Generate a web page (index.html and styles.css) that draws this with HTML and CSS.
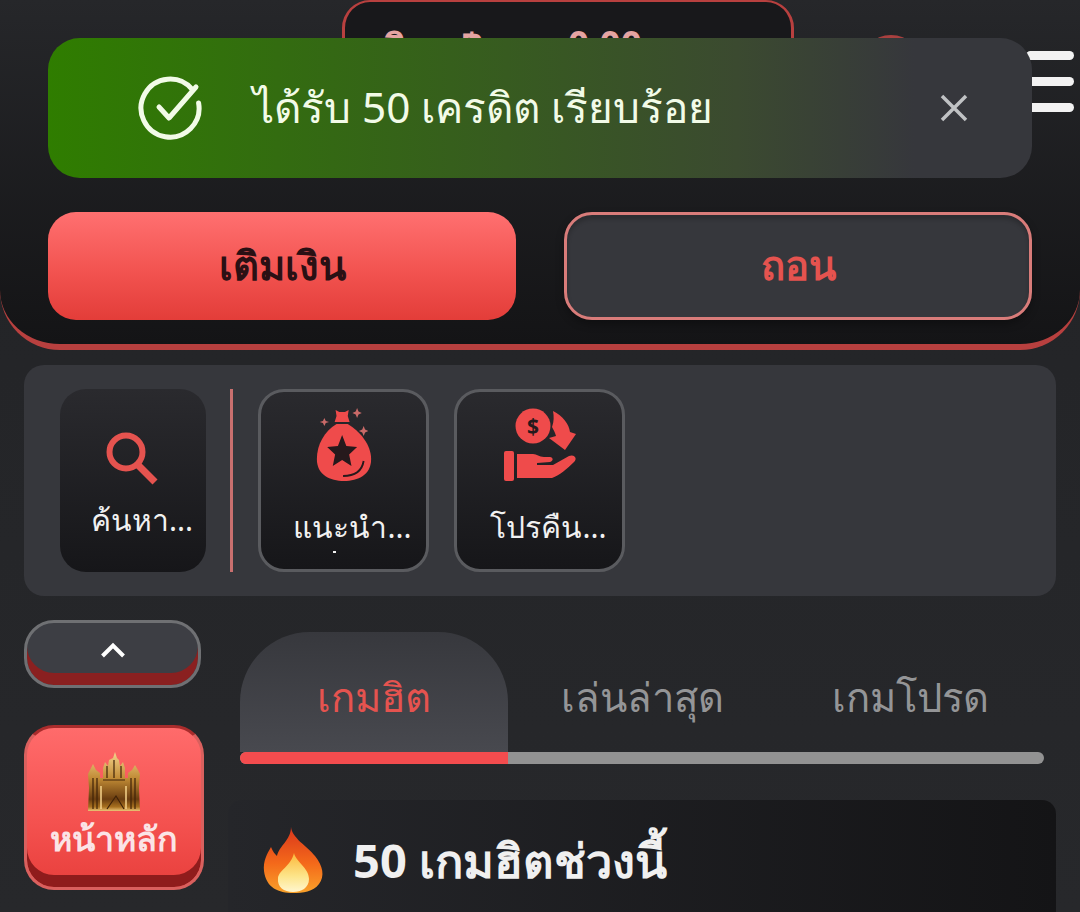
FILE: index.html
```html
<!DOCTYPE html>
<html lang="th">
<head>
    <meta charset="UTF-8">
    <meta name="viewport" content="width=device-width, initial-scale=1.0">
    <title>หน้าหลัก</title>
    <link rel="stylesheet" href="styles.css">
</head>
<body>
    <div class="page">
        <header class="header">
            <div class="top-row">
                <div class="balance">
                    <span class="balance-name">เงิน</span>
                    <span class="balance-sign">฿</span>
                    <span class="balance-amount">0.00</span>
                </div>
                <div class="avatar"></div>
                <div class="burger"><span></span><span></span><span></span></div>
            </div>
            <div class="actions">
                <button class="btn btn-deposit">เติมเงิน</button>
                <button class="btn btn-withdraw">ถอน</button>
            </div>
        </header>

        <section class="quick">
            <div class="quick-item quick-search">
                <svg class="quick-icon icon-search" viewBox="0 0 56 56">
                    <circle cx="21" cy="21" r="16.500" fill="none" stroke="#e5534f" stroke-width="6"/>
                    <path d="M33 34 L50 51" stroke="#e5534f" stroke-width="7" fill="none"/>
                </svg>
                <span class="quick-label">ค้นหา...</span>
            </div>
            <div class="quick-divider"></div>
            <div class="quick-item quick-framed">
                <svg class="quick-icon icon-bag" viewBox="0 0 62 76" preserveAspectRatio="none">
                    <path d="M22 3 L26 5 L32 5 L36 3 L35 9 L37 15 L21 15 L23 9 Z" fill="#ef4b4b"/>
                    <path d="M23 17 L35 17 C48 24 60 38 60 52 C60 68 46 74 31 74 C16 74 2 68 2 52 C2 38 10 24 23 17 Z" fill="#ef4b4b"/>
                    <path d="M29 28 L33.500 39 L45 40 L36.500 47.500 L39 59 L29 53 L19 59 L21.500 47.500 L13 40 L24.500 39 Z" fill="#26191c"/>
                    <path d="M30 69 C42 69 50 65 52 54" fill="none" stroke="#26191c" stroke-width="2"/>
                    <path d="M45 1 L46.500 4.500 L50 6 L46.500 7.500 L45 11 L43.500 7.500 L40 6 L43.500 4.500 Z" fill="#c96a68"/>
                    <path d="M10 11 L11.500 14 L15 15 L11.500 16 L10 19 L8.500 16 L5 15 L8.500 14 Z" fill="#c96a68"/>
                    <path d="M52 19 L53.500 22.500 L57 24 L53.500 25.500 L52 29 L50.500 25.500 L47 24 L50.500 22.500 Z" fill="#c96a68"/>
                </svg>
                <span class="quick-label quick-label-low">แนะนำ...</span>
                <span class="quick-cut"></span>
            </div>
            <div class="quick-item quick-framed">
                <svg class="quick-icon icon-refund" viewBox="0 0 74 76">
                    <circle cx="30" cy="19" r="17.500" fill="#ef4b4b"/>
                    <text x="30" y="26.500" class="dollar" text-anchor="middle">$</text>
                    <path d="M50 4 C60 9 66 17 67 25 L73 27 L62 43 L46 31 L53 29 C52 25 50 22 49 20 C51 15 51 9 50 4 Z" fill="#ef4b4b"/>
                    <rect x="1" y="44" width="10" height="30" rx="2" fill="#ef4b4b"/>
                    <path d="M14 47 L30 47 C34 47 36 50 41 50 L47 50 C50 50 51 54 47 55 L34 56 L34 58 L50 58 L66 49 C71 47 75 51 71 55 C64 62 57 68 49 71 L14 71 Z" fill="#ef4b4b"/>
                </svg>
                <span class="quick-label quick-label-low">โปรคืน...</span>
            </div>
        </section>

        <div class="main">
            <aside class="side">
                <button class="up-btn">
                    <svg class="up-arrow" viewBox="0 0 26 16"><path d="M2.500 14 L13 3.500 L23.500 14" fill="none" stroke="#fff" stroke-width="4"/></svg>
                </button>
                <button class="home-btn">
                    <svg class="castle" viewBox="0 0 54 60">
                        <defs>
                            <linearGradient id="gold" x1="0" y1="0" x2="0" y2="1">
                                <stop offset="0" stop-color="#f6d48c"/>
                                <stop offset="0.45" stop-color="#c08a35"/>
                                <stop offset="0.8" stop-color="#6a3d10"/>
                                <stop offset="0.93" stop-color="#a8701f"/>
                                <stop offset="1" stop-color="#edc578"/>
                            </linearGradient>
                        </defs>
                        <path d="M28 0 L30 6 L32 8 L33 14 L36 10 L38 16 L38 26 L41 26 L41 21 L45 18 L48 13 L51 18 L53 22 L52 36 L53 59 L1 59 L2 36 L1 22 L3 18 L6 12 L9 18 L13 21 L13 26 L16 26 L16 16 L18 10 L21 14 L22 8 L26 6 Z" fill="url(#gold)"/>
                        <path d="M6 26 V57 M10 26 V57 M44 26 V57 M48 26 V57 M16 28 H38 M20 57 L29 44 L37 57 M20 14 V26 M27 8 V26 M34 14 V26" fill="none" stroke="#3f2208" stroke-width="1.200"/>
                        <path d="M14 34 V57 M39 34 V57" fill="none" stroke="#f6d48c" stroke-width="1.500"/>
                    </svg>
                    <span class="home-label">หน้าหลัก</span>
                </button>
            </aside>

            <div class="content">
                <nav class="tabs">
                    <div class="tab tab-active">เกมฮิต</div>
                    <div class="tab">เล่นล่าสุด</div>
                    <div class="tab">เกมโปรด</div>
                </nav>
                <div class="tab-bar"><div class="tab-bar-fill"></div></div>

                <div class="hot-card">
                    <svg class="flame" viewBox="0 0 62 68">
                        <defs>
                            <linearGradient id="flameOuter" x1="0" y1="0" x2="0" y2="1">
                                <stop offset="0" stop-color="#d9361c"/>
                                <stop offset="0.55" stop-color="#f4691a"/>
                                <stop offset="1" stop-color="#f9a12a"/>
                            </linearGradient>
                            <linearGradient id="flameInner" x1="0" y1="0" x2="0" y2="1">
                                <stop offset="0" stop-color="#fbb73a"/>
                                <stop offset="0.6" stop-color="#fde58a"/>
                                <stop offset="1" stop-color="#fff6cf"/>
                            </linearGradient>
                        </defs>
                        <path d="M28 1 C29 12 44 20 52 30 C60 40 62 50 56 58 C50 66 40 67 30 67 C16 67 3 62 1 45 C0 35 4 28 8 21 C10 26 12 28 14 30 C16 20 28 14 28 1 Z" fill="url(#flameOuter)"/>
                        <path d="M31 27 C33 36 46 42 46 53 C46 62 38 66 30 66 C21 66 14 61 15 52 C16 44 28 40 31 27 Z" fill="url(#flameInner)"/>
                    </svg>
                    <h2 class="hot-title">50 เกมฮิตช่วงนี้</h2>
                </div>
            </div>
        </div>

        <div class="toast">
            <svg class="toast-check" viewBox="0 0 68 68">
                <path d="M55.200 15.400 A29 29 0 1 0 61.600 29" fill="none" stroke="#f2fbe8" stroke-width="5" stroke-linecap="round"/>
                <path d="M22 33 L32 44 L59 13" fill="none" stroke="#f2fbe8" stroke-width="5" stroke-linecap="round" stroke-linejoin="round"/>
            </svg>
            <span class="toast-text">ได้รับ 50 เครดิต เรียบร้อย</span>
            <svg class="toast-close" viewBox="0 0 28 28">
                <path d="M2 2 L26 26 M26 2 L2 26" stroke="#c0c2c4" stroke-width="3.500"/>
            </svg>
        </div>
    </div>
</body>
</html>
```

FILE: styles.css
```css
* {
    box-sizing: border-box;
}

html, body {
    margin: 0;
    height: 100%;
}

body {
    font-family: "Noto Sans", "Open Sans", sans-serif;
    background-color: #26272b;
    overflow: hidden;
}

button {
    font-family: inherit;
    padding: 0;
    cursor: pointer;
}

.page {
    position: relative;
    width: 1080px;
    height: 912px;
    overflow: hidden;
    background: linear-gradient(to bottom, #222326, #27282b);
}

/* Header */
.header {
    height: 350px;
    padding: 0 48px;
    background: linear-gradient(to bottom, #26272a, #141416);
    border-bottom: 6px solid #b8403f;
    border-radius: 0 0 60px 60px;
}

.top-row {
    display: flex;
    align-items: flex-start;
    height: 212px;
}

.balance {
    display: flex;
    width: 452px;
    height: 150px;
    margin-left: 294px;
    padding: 16px 0 0 30px;
    flex-shrink: 0;
    background: #18181b;
    border: 3px solid #b8403f;
    border-top-width: 2px;
    border-radius: 28px;
    color: #e5a4a2;
    font-size: 37px;
    font-weight: 700;
}

.balance-sign {
    margin-left: 30px;
}

.balance-amount {
    margin-left: 84px;
}

.avatar {
    width: 62px;
    height: 62px;
    margin: 35px 0 0 66px;
    flex-shrink: 0;
    border-radius: 50%;
    background: #a8403f;
}

.burger {
    display: flex;
    flex-direction: column;
    gap: 17px;
    width: 48px;
    margin: 51px 0 0 104px;
    flex-shrink: 0;
}

.burger span {
    height: 9px;
    border-radius: 5px;
    background: #f2f2f2;
}

.actions {
    display: grid;
    grid-template-columns: 1fr 1fr;
    gap: 48px;
}

.btn {
    height: 108px;
    border-radius: 28px;
    font-size: 40px;
    font-weight: 700;
}

.btn-deposit {
    color: #2a1014;
    border: none;
    background: linear-gradient(to bottom, #ff7070, #f25350 55%, #e33d39);
}

.btn-withdraw {
    color: #e5534f;
    background: #36373c;
    border: 3px solid #d97c7a;
    box-shadow: inset 0 4px 4px rgba(0, 0, 0, 0.2), 0 4px 8px rgba(0, 0, 0, 0.3);
}

/* Quick menu */
.quick {
    display: flex;
    align-items: stretch;
    gap: 25px;
    height: 231px;
    margin: 15px 24px 0;
    padding: 24px 36px;
    background: #36373c;
    border-radius: 20px;
}

.quick-item {
    display: flex;
    flex-direction: column;
    align-items: center;
    border-radius: 26px;
    background: linear-gradient(to bottom, #2a2a2e, #161619);
    overflow: hidden;
}

.quick-search {
    width: 146px;
    padding-top: 42px;
}

.quick-framed {
    width: 171px;
    padding-top: 15px;
    border: 3px solid #5a5b5f;
}

.quick-icon {
    width: 74px;
    height: 76px;
}

.icon-search {
    width: 56px;
    height: 56px;
}

.icon-bag {
    width: 58px;
}

.dollar {
    fill: #26191c;
    font-size: 21px;
    font-weight: 700;
}

.quick-label {
    margin-top: 10px;
    padding-left: 18px;
    color: #f1f1f1;
    font-size: 30px;
    white-space: nowrap;
}

.quick-label-low {
    margin-top: 21px;
}

.quick-cut {
    width: 3px;
    height: 2px;
    margin: 0 18px 0 0;
    background: #f1f1f1;
}

.quick-divider {
    width: 3px;
    margin-left: -1px;
    background: #c9706f;
}

/* Main area */
.main {
    display: flex;
    gap: 36px;
    padding: 24px 24px 0;
}

.side {
    display: flex;
    flex-direction: column;
    width: 180px;
    flex-shrink: 0;
}

.up-btn {
    width: 177px;
    height: 68px;
    border-radius: 30px;
    border: 3px solid #6f7073;
    background: #3d3e44;
    box-shadow: inset 0 -12px 0 #8a2020;
}

.up-arrow {
    display: block;
    width: 26px;
    height: 16px;
    margin: -9px auto 0;
}

.home-btn {
    display: flex;
    flex-direction: column;
    align-items: center;
    width: 180px;
    height: 165px;
    margin-top: 37px;
    padding-top: 24px;
    border: 3px solid #d9605e;
    border-top-color: #a92c2c;
    border-radius: 30px;
    background: linear-gradient(to bottom, #ff6b6b, #f4514f 60%, #e83f3c);
    box-shadow: inset 0 -12px 0 #8f1c1c;
}

.castle {
    width: 54px;
    height: 60px;
    flex-shrink: 0;
}

.home-label {
    margin-top: 4px;
    color: #fbe4e6;
    font-size: 34px;
    font-weight: 700;
    line-height: 1.3;
}

.content {
    flex: 1;
    margin-top: 12px;
    padding-right: 12px;
    min-width: 0;
}

.tabs {
    display: flex;
    height: 120px;
}

.tab {
    flex: 1;
    padding-top: 37px;
    text-align: center;
    color: #949597;
    font-size: 40px;
    line-height: 1.4;
}

.tab-active {
    color: #e5534f;
    background: linear-gradient(to bottom, #37383d, #48494f);
    border-radius: 70px 70px 0 0;
}

.tab-bar {
    height: 12px;
    border-radius: 6px;
    background: #929292;
    overflow: hidden;
}

.tab-bar-fill {
    width: 33.33%;
    height: 100%;
    background: #f34c4e;
}

.hot-card {
    display: flex;
    align-items: flex-start;
    gap: 28px;
    height: 140px;
    margin: 36px -12px 0;
    padding: 26px 0 0 35px;
    background: linear-gradient(to right, #25262a, #141416);
    border-radius: 14px;
}

.flame {
    width: 62px;
    height: 68px;
    flex-shrink: 0;
}

.hot-title {
    margin: 0;
    color: #f0f0f0;
    font-size: 47px;
    font-weight: 700;
    line-height: 68px;
}

/* Toast */
.toast {
    position: absolute;
    top: 38px;
    left: 48px;
    display: flex;
    align-items: center;
    width: 984px;
    height: 140px;
    padding: 0 64px 0 89px;
    background: linear-gradient(to right, #2f7d00, #3b4a30 70%, #36373c 88%);
    border-radius: 32px;
}

.toast-check {
    width: 68px;
    height: 68px;
    flex-shrink: 0;
}

.toast-text {
    flex: 1;
    margin-left: 48px;
    color: #f2fbe8;
    font-size: 42.3px;
    white-space: nowrap;
}

.toast-close {
    width: 28px;
    height: 28px;
    flex-shrink: 0;
}
```
